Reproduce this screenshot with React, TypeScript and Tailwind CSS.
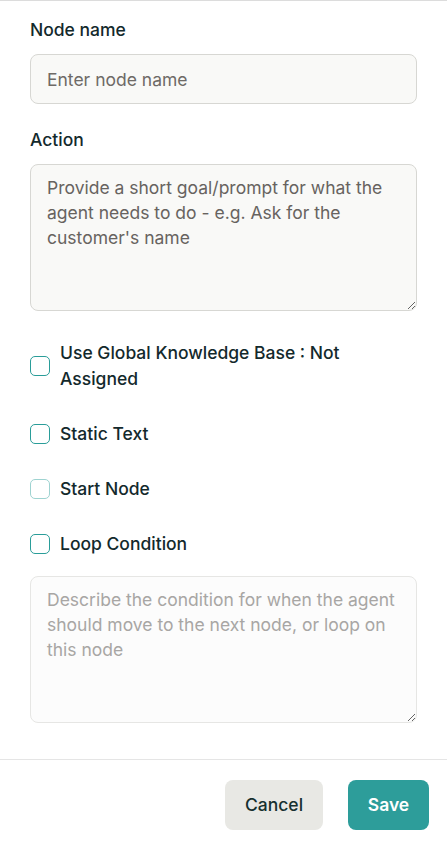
import React from "react";

function CheckRow({ label, faded }: { label: string; faded?: boolean }) {
  return (
    <div className="flex items-center gap-[10px]">
      <div
        className={
          "h-[20px] w-[20px] shrink-0 rounded-[5px] border-[1.5px] " +
          (faded ? "border-[#9ed3d1]" : "border-[#2a9d99]")
        }
      />
      <span className="text-[17.5px] font-medium leading-[26px] text-[#13292c]">{label}</span>
    </div>
  );
}

export default function App() {
  return (
    <div
      className="flex h-[845px] w-[447px] flex-col border-t border-[#dcdcdc] bg-white"
      style={{ fontFamily: "Inter, 'Noto Sans', sans-serif" }}
    >
      <div className="flex flex-col px-[30px] pt-[17px]">
        <label className="mb-[12px] text-[17.5px] font-medium leading-[24px] text-[#13292c]">Node name</label>
        <input
          className="h-[50px] w-full rounded-[8px] border border-[#d7d7d3] bg-[#f9f9f7] px-[16px] text-[17.5px] text-[#333] outline-none placeholder:text-[#6e6a66]"
          placeholder="Enter node name"
        />
        <label className="mb-[12px] mt-[24px] text-[17.5px] font-medium leading-[24px] text-[#13292c]">Action</label>
        <textarea
          className="h-[147px] w-full rounded-[8px] border border-[#d7d7d3] bg-[#f9f9f7] px-[16px] pt-[10px] text-[17.5px] leading-[25px] text-[#333] outline-none placeholder:text-[#67635f]"
          placeholder="Provide a short goal/prompt for what the agent needs to do - e.g. Ask for the customer's name"
        />
        <div className="mt-[29px] flex flex-col gap-[29px]">
          <CheckRow label="Use Global Knowledge Base : Not Assigned" />
          <CheckRow label="Static Text" />
          <CheckRow label="Start Node" faded />
          <CheckRow label="Loop Condition" />
        </div>
        <textarea
          className="mt-[19px] h-[147px] w-full rounded-[8px] border border-[#e6e6e4] bg-[#fcfcfc] px-[16px] pt-[10px] text-[17.5px] leading-[25px] text-[#333] outline-none placeholder:text-[#a8a6a4]"
          placeholder="Describe the condition for when the agent should move to the next node, or loop on this node"
        />
      </div>
      <div className="mt-[36px] flex justify-end gap-[25px] border-t border-[#e5e5e5] pb-[15px] pl-[30px] pr-[18px] pt-[20px]">
        <button className="h-[50px] w-[98px] rounded-[8px] bg-[#e8e8e4] text-[17.5px] font-medium text-[#16302f]">
          Cancel
        </button>
        <button className="h-[50px] w-[81px] rounded-[8px] bg-[#2d9d9a] text-[17.5px] font-semibold text-white">
          Save
        </button>
      </div>
    </div>
  );
}
